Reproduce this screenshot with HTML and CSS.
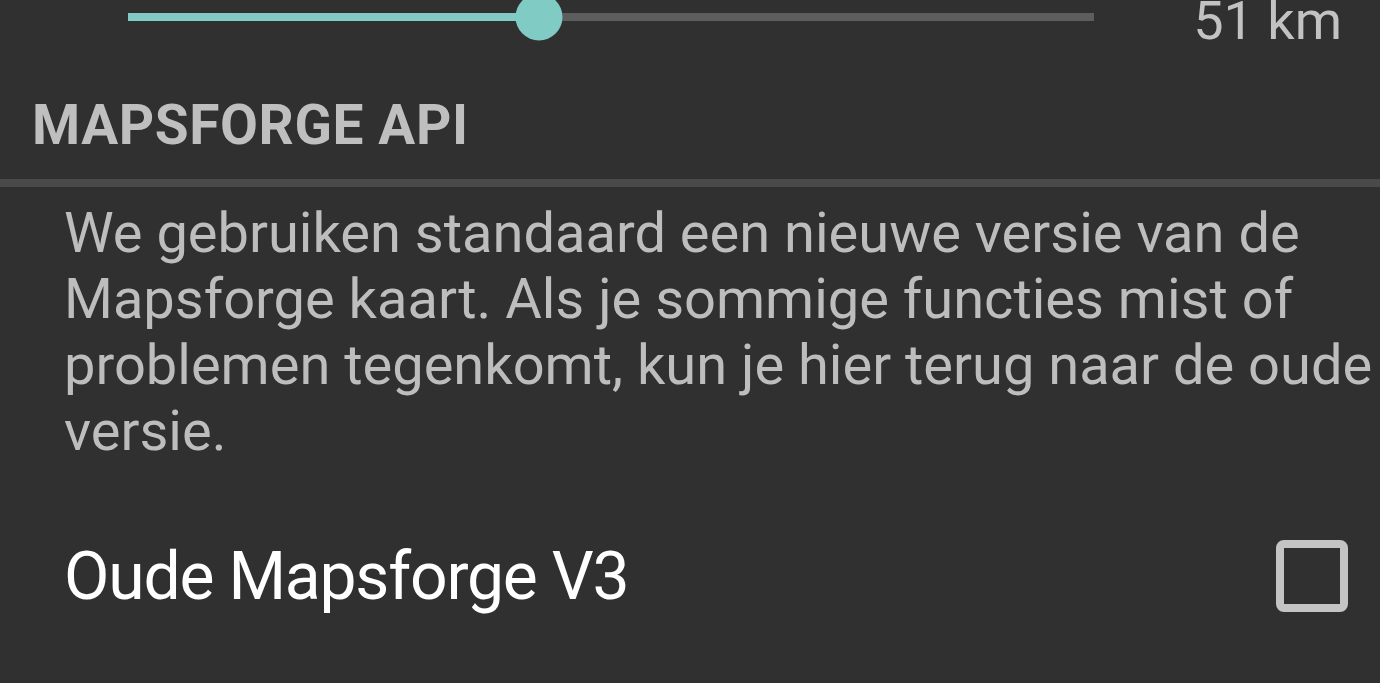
FILE: index.html
```html
<!DOCTYPE html>
<html lang="nl">
<head>
<meta charset="utf-8">
<title>Instellingen</title>
<link rel="stylesheet" href="styles.css">
</head>
<body>
<div class="screen">
  <div class="seek-row">
    <div class="track">
      <div class="track-fill" style="width:42.5%"></div>
      <div class="thumb" style="left:42.5%"></div>
    </div>
    <div class="seek-value">51 km</div>
  </div>

  <h2 class="category">MAPSFORGE API</h2>
  <div class="divider"></div>

  <p class="summary">We gebruiken standaard een nieuwe versie van de<br>Mapsforge kaart. Als je sommige functies mist of<br>problemen tegenkomt, kun je hier terug naar de oude<br>versie.</p>

  <div class="pref-row">
    <span class="pref-title">Oude Mapsforge V3</span>
    <span class="checkbox"></span>
  </div>
</div>
</body>
</html>
```

FILE: styles.css
```css
html, body {
  margin: 0;
  padding: 0;
  background: #303030;
  overflow: hidden;
}

.screen {
  width: 1380px;
  height: 683px;
  background: #303030;
  font-family: Roboto, "Noto Sans", sans-serif;
  overflow: hidden;
}

.seek-row {
  display: flex;
  align-items: center;
  height: 34px;
  padding-left: 128px;
  padding-right: 38px;
}

.track {
  position: relative;
  flex: 0 0 966px;
  height: 8px;
  background: #5d5d5d;
}

.track-fill {
  height: 100%;
  background: #80cbc4;
}

.thumb {
  position: absolute;
  top: 50%;
  width: 47px;
  height: 47px;
  border-radius: 50%;
  background: #80cbc4;
  transform: translate(-50%, -50%);
}

.seek-value {
  margin-left: auto;
  align-self: flex-start;
  margin-top: -6px;
  font-size: 54px;
  line-height: 54px;
  color: #c2c2c2;
  white-space: nowrap;
}

.category {
  margin: 0;
  padding: 59px 0 22px 32px;
  font-size: 55px;
  line-height: 64px;
  font-weight: 700;
  letter-spacing: 0.6px;
  color: #bfbfbf;
}

.divider {
  height: 8px;
  background: #4a4a4a;
}

.summary {
  margin: 0;
  padding: 13px 0 0 64px;
  font-size: 56px;
  line-height: 66px;
  color: #bdbdbd;
  white-space: nowrap;
}

.pref-row {
  display: flex;
  align-items: center;
  min-height: 224px;
  padding: 0 32px 0 64px;
}

.pref-title {
  font-size: 66px;
  letter-spacing: -1.2px;
  color: #ffffff;
}

.checkbox {
  margin-left: auto;
  box-sizing: border-box;
  width: 72px;
  height: 72px;
  border: 8px solid #c4c4c4;
  border-radius: 8px;
}
```
